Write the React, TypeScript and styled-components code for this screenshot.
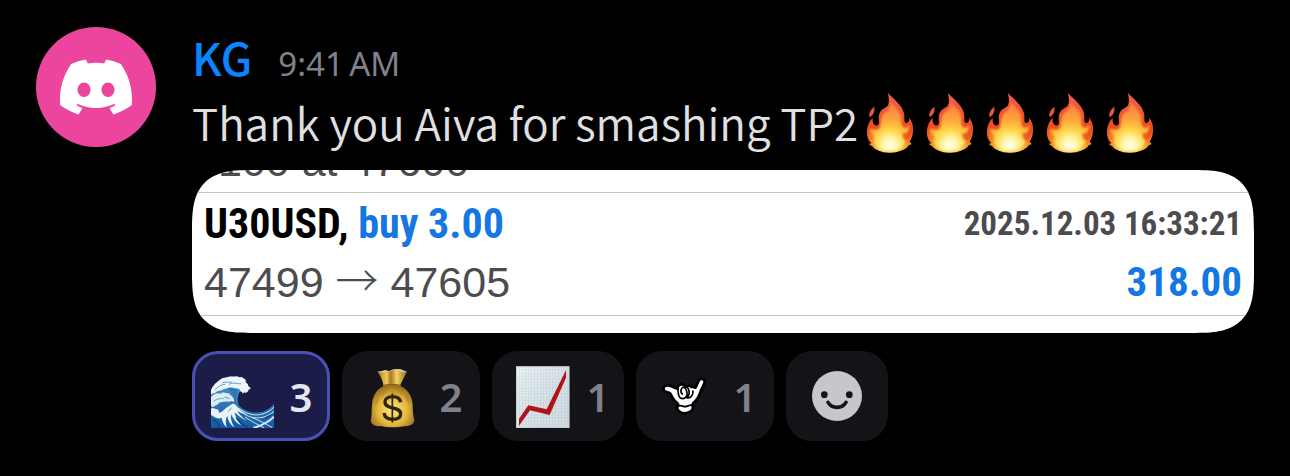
import React from 'react';
import styled, { createGlobalStyle, css } from 'styled-components';
import { SiDiscord } from 'react-icons/si';

const GlobalStyle = createGlobalStyle`
  body {
    margin: 0;
    background: #000;
    font-family: "Noto Sans CJK SC", "Noto Sans", sans-serif;
  }
`;

const Message = styled.article`
  display: flex;
  gap: 36px;
  padding: 27px 36px 35px;
`;

const Avatar = styled.div`
  flex: none;
  display: flex;
  align-items: center;
  justify-content: center;
  width: 120px;
  height: 120px;
  border-radius: 50%;
  background: #ec459e;
  color: #fff;
`;

const Content = styled.div`
  flex: 1;
  min-width: 0;
`;

const Header = styled.header`
  display: flex;
  align-items: baseline;
  gap: 26px;
  height: 63px;
  line-height: 60px;
`;

const Author = styled.strong`
  font-size: 45px;
  font-weight: 500;
  color: #0a84ff;
`;

const Time = styled.time`
  font-family: "Noto Sans", sans-serif;
  font-size: 33px;
  color: #80828b;
`;

const Body = styled.p`
  display: flex;
  flex-wrap: wrap;
  align-items: center;
  margin: 0;
  font-size: 44px;
  font-weight: 350;
  line-height: 64px;
  color: #e0e0e3;
`;

const Flames = styled.span`
  display: flex;
  margin-left: 7px;
`;

const Attachment = styled.section`
  margin-top: 16px;
  overflow: hidden;
  border-radius: 62px;
  corner-shape: superellipse(1.6);
  background: #fff;
  color: #4c4c50;
  font-family: "Liberation Sans", Arial, sans-serif;
  font-size: 43px;
`;

const EarlierTrade = styled.div`
  display: flex;
  align-items: flex-end;
  height: 22px;
  padding-left: 26px;
  line-height: 50px;
`;

const EarlierText = styled.span`
  padding-bottom: 6px;
`;

const Trade = styled.div`
  padding: 2px 12px 4px;
  border: solid #c6c6c8;
  border-width: 1px 0;
  margin-bottom: 17px;
`;

const TradeRow = styled.div`
  display: flex;
  align-items: center;
  justify-content: space-between;
  line-height: 58px;
  white-space: pre;
`;

const condensed = css`
  font-family: "Roboto Condensed", "Liberation Sans Narrow", sans-serif;
  font-weight: 700;
`;

const Symbol = styled.span`
  ${condensed}
  font-size: 42px;
  color: #000;
`;

const Blue = styled.span`
  color: #1577e2;
`;

const Stamp = styled.time`
  ${condensed}
  font-size: 33px;
`;

const Profit = styled.span`
  ${condensed}
  font-size: 41px;
  color: #1577e2;
`;

const Arrow = styled.span`
  font-family: "Noto Sans CJK SC", sans-serif;
  font-weight: 300;
  line-height: 1;
`;

const Reactions = styled.div`
  display: flex;
  flex-wrap: wrap;
  gap: 12px;
  margin-top: 18px;
`;

const Reaction = styled.button<{ $active?: boolean }>`
  display: flex;
  align-items: center;
  gap: 16px;
  height: 90px;
  padding: 0 15px;
  border: 3px solid ${p => (p.$active ? '#4a50b4' : '#131318')};
  border-radius: 26px;
  background: ${p => (p.$active ? '#1b1c48' : '#131318')};
  color: ${p => (p.$active ? '#e6e6f2' : '#80828b')};
  font-family: "Noto Sans", sans-serif;
  font-size: 40px;
  font-weight: 600;
`;

const AddReaction = styled(Reaction)`
  padding: 0 23px;
`;

const Count = styled.span<{ $narrow?: boolean }>`
  display: flex;
  justify-content: center;
  width: ${p => (p.$narrow ? '16px' : '22px')};
`;

const Emoji = styled.svg`
  display: block;
  width: 64px;
  height: 64px;
`;

const Flame = styled.svg`
  display: block;
  width: 60px;
  height: 64px;
`;

const Face = styled.svg`
  display: block;
  width: 50px;
  height: 50px;
`;

function Fire({ id }: { id: number }) {
  return (
    <Flame viewBox="77 30 180 192" role="img" aria-label="fire">
      <defs>
        <radialGradient id={`glow${id}`} gradientUnits="userSpaceOnUse" cx="152" cy="196" r="118">
          <stop offset="0" stopColor="#fffef0" />
          <stop offset=".17" stopColor="#fff8b0" />
          <stop offset=".4" stopColor="#ffd545" />
          <stop offset=".66" stopColor="#fda43a" />
          <stop offset="1" stopColor="#fb8540" />
        </radialGradient>
        <linearGradient id={`rim${id}`} x1="0" y1="0" x2="0" y2="1">
          <stop offset="0" stopColor="#f0604a" />
          <stop offset=".6" stopColor="#ee4720" />
          <stop offset=".85" stopColor="#f58a1c" />
          <stop offset="1" stopColor="#ffd95a" />
        </linearGradient>
        <filter id={`soft${id}`} x="-20%" y="-20%" width="140%" height="140%">
          <feGaussianBlur stdDeviation="3" />
        </filter>
      </defs>
      <path fill="#e4583e" d="M105 80C107 94 102 106 91 111C86 100 96 87 105 80Z" />
      <path
        fill={`url(#rim${id})`}
        d="M146 39C162 57 188 74 194 100C197 114 192 127 200 129C208 129 211 122 209 114C218 122 223 138 221 156C220 168 215 178 211 186C215 188 217 191 217 193C213 194 209 195 207 198C197 210 176 218 152 218C126 218 108 210 98 198C96 196 91 195 88 191C92 191 95 191 95 189C86 180 81 166 83 151C85 135 91 121 101 114C97 125 104 139 114 136C125 132 113 116 121 99C127 85 138 87 146 76C151 66 148 50 146 39Z"
      />
      <path
        filter={`url(#soft${id})`}
        fill={`url(#glow${id})`}
        d="M155 67C165 82 183 91 185 110C187 125 184 139 195 143C203 143 208 138 210 134C213 157 203 176 199 187C193 205 174 214 152 214C128 214 109 206 103 188C96 176 89 166 93 144C99 150 116 153 121 143C128 130 122 118 131 104C139 93 154 91 155 67Z"
      />
      <path filter={`url(#soft${id})`} fill="#e5391b" opacity=".75" d="M214 140C218 160 209 176 203 183C193 180 188 170 190 160C200 162 209 152 214 140Z" />
      <path filter={`url(#soft${id})`} fill="#f05a1e" opacity=".6" d="M88 146C84 166 94 178 101 183C109 178 104 165 98 158C92 156 89 151 88 146Z" />
    </Flame>
  );
}

function Wave() {
  return (
    <Emoji viewBox="75 59 192 192" role="img" aria-label="wave">
      <defs>
        <linearGradient id="sea" x1="0" y1="0" x2="0" y2="1">
          <stop offset="0" stopColor="#4f9bc9" />
          <stop offset="1" stopColor="#1459a0" />
        </linearGradient>
      </defs>
      <path fill="url(#sea)" d="M78 136C90 114 112 98 130 98C150 92 170 97 180 108L194 130L184 146L166 140C158 150 156 166 161 182C176 199 200 206 222 204C243 201 257 190 267 178V252H78Z" />
      <path fill="#2a78b6" d="M128 130C140 126 152 132 158 140C150 156 152 172 158 184L146 180C146 160 142 146 128 130Z" />
      <path fill="#edf5f8" d="M78 137C84 122 97 112 108 104C116 98 124 102 130 98C138 94 144 99 150 97C158 94 162 100 168 98C174 98 175 104 181 105C184 110 180 113 184 117C191 118 187 125 193 128C200 132 196 136 190 135C192 142 186 143 182 146C180 140 176 146 172 148C173 140 168 144 165 139C166 133 158 135 156 131C150 135 144 127 138 130C130 128 126 134 120 133C112 134 110 140 101 139C94 140 92 148 84 147L78 151Z" />
      <path fill="#dcecf4" d="M78 158C86 148 98 144 108 148C114 140 124 150 130 146C137 153 146 158 147 166C151 172 142 174 138 169C133 176 128 168 122 173C116 168 110 176 104 174C98 184 90 182 84 189L78 184Z" />
      <path fill="#e8f2f7" d="M78 193C86 187 92 198 98 194L104 206C114 202 124 188 136 183C142 178 147 177 151 181C162 194 174 205 188 211C176 210 164 204 157 200C163 211 172 220 186 229C170 224 158 212 149 204C151 218 158 231 168 243C153 236 144 222 138 209C136 222 140 236 148 249C136 242 129 228 127 215C120 224 123 240 125 250C116 240 111 230 110 220C101 226 91 220 78 212Z" />
      <path fill="none" stroke="#cfe4f1" strokeWidth="3" d="M162 192C182 208 205 214 224 211C243 208 257 199 267 188M176 207C190 219 210 222 228 220C246 217 258 209 267 201M180 218C205 235 222 242 238 251M200 219C222 228 242 238 262 250" />
      <path fill="none" stroke="#dbeaf4" strokeWidth="6" d="M205 251C228 244 250 235 267 217" />
      <path fill="none" stroke="#0f4585" strokeWidth="5" d="M84 226C94 228 100 238 104 250M154 220C164 234 178 244 190 250M240 222L260 212" />
      <path fill="none" stroke="#5b9dc8" strokeWidth="3" d="M90 138C98 126 110 121 120 120M112 116C122 110 132 116 140 113M132 120C146 112 158 120 168 118M86 171C96 162 108 162 116 163M118 158L134 163M140 190L130 202" />
    </Emoji>
  );
}

function MoneyBag() {
  return (
    <Emoji viewBox="60 57 192 192" role="img" aria-label="money bag">
      <defs>
        <radialGradient id="bag" cx=".5" cy=".6" r=".62">
          <stop offset="0" stopColor="#ffe873" />
          <stop offset=".55" stopColor="#e3b73f" />
          <stop offset="1" stopColor="#8f6317" />
        </radialGradient>
        <linearGradient id="neck" x1="0" y1="0" x2="1" y2="0">
          <stop offset="0" stopColor="#a97a21" />
          <stop offset=".3" stopColor="#f0cc57" />
          <stop offset=".45" stopColor="#a87820" />
          <stop offset=".65" stopColor="#f3d362" />
          <stop offset="1" stopColor="#99701f" />
        </linearGradient>
      </defs>
      <path fill="#d5cdb5" d="M112 80L126 78L135 75L148 78L160 73L180 72L201 80L192 88H121Z" />
      <path fill="url(#neck)" d="M114 82C124 78 130 86 137 78C146 76 150 83 158 76C168 72 176 74 181 78C187 85 194 79 200 81C194 94 188 106 181 119L179 128H132L130 119C127 105 122 94 114 82Z" />
      <path fill="url(#bag)" d="M131 123C142 119 170 119 181 123C202 132 216 151 218 179C218 202 221 216 223 226C221 240 207 244 192 244C170 248 140 248 122 243C105 245 93 239 92 225C96 216 94 200 96 181C97 152 111 131 131 123Z" />
      <path fill="none" stroke="#8f6219" strokeWidth="4" d="M129 122C143 118 168 118 183 122" />
      <path fill="none" stroke="#996d1d" strokeWidth="2" opacity=".8" d="M133 127C121 139 112 156 108 178M144 126C137 134 130 145 126 156M177 127C192 139 202 153 206 176M166 126C174 132 181 140 186 150" />
      <path fill="none" stroke="#32230f" strokeWidth="10" d="M182 172C180 159 170 155 158 155C144 155 135 161 135 171C135 183 146 186 158 189C172 192 182 195 182 207C182 219 172 223 158 223C144 223 134 217 132 204" />
      <path fill="none" stroke="#32230f" strokeWidth="5" d="M157 145V233" />
    </Emoji>
  );
}

function RisingChart() {
  return (
    <Emoji viewBox="60 59 192 192" role="img" aria-label="chart increasing">
      <defs>
        <pattern id="grid" x="78" y="67" width="9" height="9" patternUnits="userSpaceOnUse">
          <rect width="9" height="9" fill="#e8eef1" />
          <path d="M0 0H9M0 0V9" stroke="#c2dae5" strokeWidth="4" />
        </pattern>
        <linearGradient id="shade" x1="0" y1="0" x2="1" y2="1">
          <stop offset="0" stopColor="#fff" stopOpacity=".3" />
          <stop offset="1" stopColor="#888" stopOpacity=".15" />
        </linearGradient>
      </defs>
      <rect x="78" y="66" width="160" height="185" fill="url(#grid)" />
      <rect x="79" y="67" width="158" height="183" fill="url(#shade)" stroke="#c3c8ca" strokeWidth="2" />
      <path fill="#b01419" d="M228 77V100L179 212L120 198L87 244V223L115 183L170 195Z" />
    </Emoji>
  );
}

function Shaka() {
  return (
    <Emoji viewBox="72 57 192 192" role="img" aria-label="hang loose">
      <path
        fill="#fff"
        stroke="#000"
        strokeWidth="8"
        strokeLinejoin="round"
        d="M101 128C105 120 114 120 124 124C132 127 138 130 143 132C141 122 149 117 158 119C163 120 166 122 168 125C174 121 181 122 184 126C189 123 193 128 196 128C201 121 203 112 207 105C212 99 222 101 224 108C225 117 217 126 213 136C209 150 203 164 190 174C186 178 187 181 188 184C190 191 184 199 177 202C165 207 152 204 145 197C139 191 140 186 144 182C147 178 143 175 138 171C128 163 126 152 119 144C112 141 97 140 101 128Z"
      />
      <path
        fill="none"
        stroke="#000"
        strokeWidth="5"
        strokeLinecap="round"
        d="M144 134C144 149 147 161 158 161C169 160 174 149 170 138C167 126 157 124 154 132C152 138 153 144 157 147M173 128C180 137 179 151 171 158C182 161 190 150 189 138M144 183C154 179 158 185 165 185C173 185 178 178 187 181"
      />
    </Emoji>
  );
}

function Smiley() {
  return (
    <Face viewBox="546 78 150 150" aria-hidden="true">
      <circle cx="621" cy="153" r="75" fill="#c6c6cc" />
      <circle cx="583" cy="149" r="10" fill="#131318" />
      <circle cx="658" cy="149" r="10" fill="#131318" />
      <path d="M594 172C606 192 636 192 648 172" fill="none" stroke="#131318" strokeWidth="11" strokeLinecap="round" />
    </Face>
  );
}

export default function App() {
  return (
    <>
      <GlobalStyle />
      <Message>
        <Avatar>
          <SiDiscord size={72} aria-label="Discord" />
        </Avatar>
        <Content>
          <Header>
            <Author>KG</Author>
            <Time>{'9:41\u202fAM'}</Time>
          </Header>
          <Body>
            Thank you Aiva for smashing TP2
            <Flames>
              {[1, 2, 3, 4, 5].map(n => (
                <Fire key={n} id={n} />
              ))}
            </Flames>
          </Body>
          <Attachment>
            <EarlierTrade>
              <EarlierText>100 at 47600</EarlierText>
            </EarlierTrade>
            <Trade>
              <TradeRow>
                <Symbol>
                  U30USD, <Blue>buy 3.00</Blue>
                </Symbol>
                <Stamp>2025.12.03 16:33:21</Stamp>
              </TradeRow>
              <TradeRow>
                <span>
                  47499 <Arrow>→</Arrow> 47605
                </span>
                <Profit>318.00</Profit>
              </TradeRow>
            </Trade>
          </Attachment>
          <Reactions>
            <Reaction type="button" $active aria-pressed="true">
              <Wave />
              <Count>3</Count>
            </Reaction>
            <Reaction type="button">
              <MoneyBag />
              <Count>2</Count>
            </Reaction>
            <Reaction type="button">
              <RisingChart />
              <Count $narrow>1</Count>
            </Reaction>
            <Reaction type="button">
              <Shaka />
              <Count>1</Count>
            </Reaction>
            <AddReaction type="button" aria-label="Add reaction">
              <Smiley />
            </AddReaction>
          </Reactions>
        </Content>
      </Message>
    </>
  );
}
